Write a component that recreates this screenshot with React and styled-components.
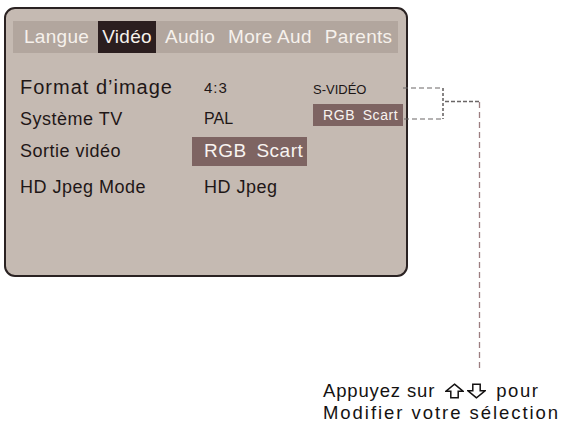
import React from "react";
import styled, { createGlobalStyle } from "styled-components";

const GlobalStyle = createGlobalStyle`
  html, body {
    margin: 0;
    padding: 0;
    background: #ffffff;
  }
  body {
    font-family: "Liberation Sans", Arial, sans-serif;
  }
`;

const Page = styled.div`
  position: relative;
  width: 565px;
  height: 429px;
  box-sizing: border-box;
  padding: 7px 0 0 4px;
  overflow: hidden;
`;

const Panel = styled.div`
  width: 404px;
  height: 270px;
  box-sizing: border-box;
  border: 2px solid #2a2222;
  border-radius: 11px;
  background: #c5bab2;
  padding: 12px 8px 0 7px;
`;

const TabBar = styled.div`
  display: flex;
  align-items: stretch;
  height: 32px;
  padding-left: 7px;
  gap: 5px;
  background: #b2a69e;
`;

const Tab = styled.div`
  display: flex;
  align-items: center;
  padding: 0 4px;
  font-size: 19px;
  letter-spacing: 0.3px;
  color: #f6f1ec;
  white-space: nowrap;
  background: ${(p) => (p.$active ? "#2b1e1f" : "transparent")};
`;

const Rows = styled.div`
  margin-top: 18px;
  padding-left: 7px;
`;

const Row = styled.div`
  display: grid;
  grid-template-columns: 172px 121px 1fr;
  height: 32px;
  align-items: center;
  margin-top: ${(p) => p.$gap || 0}px;
`;

const Label = styled.div`
  font-size: ${(p) => p.$size || 18}px;
  letter-spacing: ${(p) => p.$ls ?? 0.5}px;
  color: #1f1717;
  white-space: nowrap;
`;

const Value = styled.div`
  padding-left: 12px;
  font-size: ${(p) => p.$size || 18}px;
  letter-spacing: ${(p) => p.$ls ?? 0.5}px;
  color: #1f1717;
  white-space: nowrap;
`;

const ValueBox = styled.div`
  display: flex;
  align-items: center;
  box-sizing: border-box;
  width: 115px;
  height: 29px;
  padding-left: 12px;
  background: #7e6462;
  color: #f8f3f0;
  font-size: 19px;
  letter-spacing: 0.5px;
  word-spacing: 4px;
  white-space: nowrap;
`;

const Option = styled.div`
  align-self: start;
  margin-top: 11px;
  font-size: 13px;
  color: #1c1616;
  white-space: nowrap;
`;

const OptionBox = styled.div`
  align-self: start;
  display: flex;
  align-items: center;
  box-sizing: border-box;
  width: 90px;
  height: 22px;
  margin-top: 1px;
  padding-left: 10px;
  background: #7e6462;
  color: #f8f3f0;
  font-size: 14px;
  letter-spacing: 0.6px;
  word-spacing: 3px;
  white-space: nowrap;
`;

const Connector = styled.svg`
  position: absolute;
  left: 0;
  top: 0;
  pointer-events: none;
`;

const Caption = styled.div`
  margin: 103px 0 0 319px;
  font-size: 18.5px;
  line-height: 21.5px;
  color: #141212;
`;

const CaptionLine = styled.div`
  display: flex;
  align-items: center;
  letter-spacing: ${(p) => p.$ls}px;
  white-space: nowrap;
`;

const Word = styled.span`
  margin-left: ${(p) => p.$ml}px;
  letter-spacing: ${(p) => p.$ls ?? 0.85}px;
`;

const Arrow = styled.svg`
  flex: none;
  margin-left: ${(p) => p.$ml}px;
`;

const ArrowIcon = ({ down, ml }) => (
  <Arrow $ml={ml} width="19" height="16" viewBox="0 0 19 16">
    <path
      d="M9.5 1.2 L18 8.2 H13.2 V14.8 H5.8 V8.2 H1 Z"
      fill="none"
      stroke="#141212"
      strokeWidth="1.5"
      strokeLinejoin="miter"
      transform={down ? "rotate(180 9.5 8)" : undefined}
    />
  </Arrow>
);

const tabs = ["Langue", "Vidéo", "Audio", "More Aud", "Parents"];

export default function App() {
  return (
    <>
      <GlobalStyle />
      <Page>
        <Panel>
          <TabBar>
            {tabs.map((t) => (
              <Tab key={t} $active={t === "Vidéo"}>
                {t}
              </Tab>
            ))}
          </TabBar>
          <Rows>
            <Row>
              <Label $size={20} $ls={1}>Format d’image</Label>
              <Value $size={15} $ls={1}>4:3</Value>
              <Option>S-VIDÉO</Option>
            </Row>
            <Row>
              <Label>Système TV</Label>
              <Value $size={16} $ls={0}>PAL</Value>
              <OptionBox>RGB Scart</OptionBox>
            </Row>
            <Row>
              <Label>Sortie vidéo</Label>
              <ValueBox>RGB Scart</ValueBox>
            </Row>
            <Row $gap={4}>
              <Label>HD Jpeg Mode</Label>
              <Value>HD Jpeg</Value>
            </Row>
          </Rows>
        </Panel>
        <Caption>
          <CaptionLine $ls={0.85}>
            Appuyez sur
            <ArrowIcon ml={10} />
            <ArrowIcon down ml={3} />
            <Word $ml={10} $ls={1.6}>pour</Word>
          </CaptionLine>
          <CaptionLine $ls={1.95}>Modifier votre sélection</CaptionLine>
        </Caption>
        <Connector width="565" height="429" viewBox="0 0 565 429">
          <g stroke="#6a6666" strokeWidth="1.2" fill="none" strokeDasharray="5 3">
            <line x1="403" y1="88" x2="443" y2="88" />
            <line x1="404" y1="119" x2="443" y2="119" />
            <line x1="443" y1="88" x2="443" y2="119" strokeWidth="1.6" strokeDasharray="3 2" />
            <line x1="445" y1="101.5" x2="480" y2="101.5" strokeWidth="1.6" strokeDasharray="4 2" />
          </g>
          <line
            x1="479.5"
            y1="102"
            x2="479.5"
            y2="370"
            stroke="#9c7e80"
            strokeWidth="1.3"
            strokeDasharray="6 4"
          />
        </Connector>
      </Page>
    </>
  );
}
